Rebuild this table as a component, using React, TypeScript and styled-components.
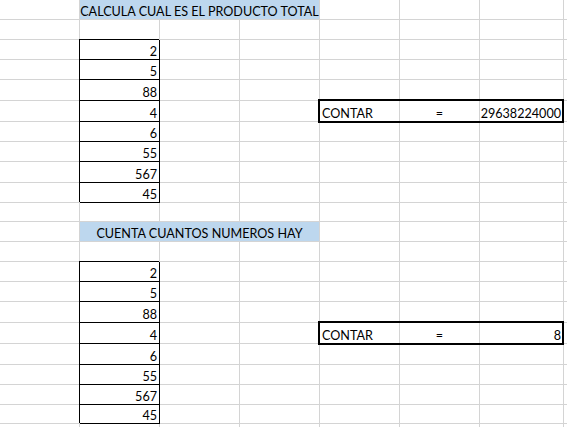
import React from "react";
import styled, { createGlobalStyle } from "styled-components";

const GlobalStyle = createGlobalStyle`
  html, body {
    margin: 0;
    padding: 0;
    background: #fff;
  }
`;

const ROW_HEIGHTS = [20, 20, 20, 20, 21, 21, 20, 20, 21, 20, 19, 20, 20, 20, 20, 21, 21, 21, 20, 20, 19, 20];
const COL_COUNT = 8;
const GRID_LINE = "#d4d4d4";

const VALUES = [2, 5, 88, 4, 6, 55, 567, 45];

interface Block {
  titleRow: number;
  title: string;
  result: string;
}

const BLOCKS: Block[] = [
  { titleRow: 0, title: "CALCULA CUAL ES EL PRODUCTO TOTAL", result: "29638224000" },
  { titleRow: 11, title: "CUENTA CUANTOS NUMEROS HAY", result: "8" },
];

type Align = "left" | "center" | "right";

interface CellContent {
  text?: string;
  align?: Align;
  boxed?: boolean;
  span?: number;
  fill?: boolean;
}

// build the sheet as a map "row:col" -> content
const buildSheet = () => {
  const cells = new Map<string, CellContent>();
  const frames: number[] = [];
  BLOCKS.forEach((b) => {
    cells.set(`${b.titleRow}:1`, { text: b.title, align: "center", span: 3, fill: true });
    VALUES.forEach((v, i) => {
      cells.set(`${b.titleRow + 2 + i}:1`, { text: String(v), align: "right", boxed: true });
    });
    const resultRow = b.titleRow + 5;
    cells.set(`${resultRow}:4`, { text: "CONTAR", align: "left" });
    cells.set(`${resultRow}:5`, { text: "=", align: "center" });
    cells.set(`${resultRow}:6`, { text: b.result, align: "right" });
    frames.push(resultRow);
  });
  return { cells, frames };
};

const Sheet = styled.div`
  display: grid;
  grid-template-columns: 80px 80px 80px 80px 80px 80px 84px 1fr;
  grid-template-rows: ${ROW_HEIGHTS.map((h) => `${h}px`).join(" ")};
  width: 567px;
  height: 427px;
  overflow: hidden;
  font-family: Lato, "Noto Sans", sans-serif;
  font-size: 12.6px;
  color: #000;
`;

const Cell = styled.div<{ $r: number; $c: number; $span: number; $align: Align; $boxed?: boolean; $fill?: boolean }>`
  grid-row: ${(p) => p.$r + 1};
  grid-column: ${(p) => p.$c + 1} / span ${(p) => p.$span};
  display: flex;
  align-items: flex-end;
  justify-content: ${(p) => (p.$align === "right" ? "flex-end" : p.$align === "center" ? "center" : "flex-start")};
  padding: 0 2px;
  line-height: 14px;
  white-space: nowrap;
  overflow: hidden;
  background: ${(p) => (p.$fill ? "#bdd7ee" : "transparent")};
  border-right: 1px solid ${(p) => (p.$boxed ? "#000" : GRID_LINE)};
  border-bottom: 1px solid ${(p) => (p.$boxed ? "#000" : GRID_LINE)};
  box-shadow: ${(p) => (p.$boxed ? "-1px -1px 0 0 #000" : "none")};
`;

const ResultFrame = styled.div<{ $r: number }>`
  grid-row: ${(p) => p.$r + 1};
  grid-column: 5 / 8;
  margin: -2px 0 -1px -2px;
  border: 2px solid #000;
  pointer-events: none;
`;

export default function App() {
  const { cells, frames } = buildSheet();
  const items: React.ReactNode[] = [];

  ROW_HEIGHTS.forEach((_, r) => {
    let c = 0;
    while (c < COL_COUNT) {
      const content = cells.get(`${r}:${c}`) ?? {};
      const span = content.span ?? 1;
      items.push(
        <Cell
          key={`${r}-${c}`}
          $r={r}
          $c={c}
          $span={span}
          $align={content.align ?? "left"}
          $boxed={content.boxed}
          $fill={content.fill}
        >
          {content.text}
        </Cell>
      );
      c += span;
    }
  });

  return (
    <>
      <GlobalStyle />
      <Sheet>
        {items}
        {frames.map((r) => (
          <ResultFrame key={`frame-${r}`} $r={r} />
        ))}
      </Sheet>
    </>
  );
}
